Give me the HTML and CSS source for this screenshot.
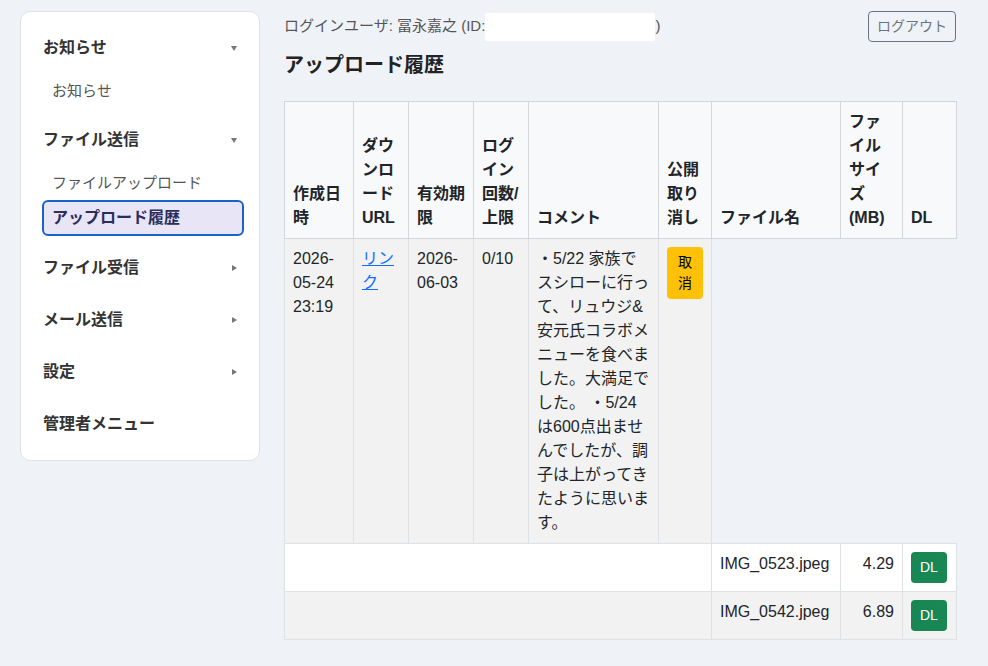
FILE: index.html
```html
<!DOCTYPE html>
<html lang="ja">
<head>
    <meta charset="UTF-8">
    <meta name="viewport" content="width=device-width, initial-scale=1.0">
    <title>アップロード履歴</title>
    <link rel="stylesheet" href="styles.css">
</head>
<body>
    <div class="layout">
        <!-- Side menu -->
        <aside class="sidebar">
            <div class="menu-group">
                <div class="menu-head">
                    <span>お知らせ</span>
                    <svg class="caret" width="6" height="5" viewBox="0 0 6 5"><polygon points="0,0 6,0 3,5"/></svg>
                </div>
                <ul class="menu-sub">
                    <li><a class="menu-link" href="#">お知らせ</a></li>
                </ul>
            </div>
            <div class="menu-group">
                <div class="menu-head">
                    <span>ファイル送信</span>
                    <svg class="caret" width="6" height="5" viewBox="0 0 6 5"><polygon points="0,0 6,0 3,5"/></svg>
                </div>
                <ul class="menu-sub">
                    <li><a class="menu-link" href="#">ファイルアップロード</a></li>
                    <li><a class="menu-link active" href="#">アップロード履歴</a></li>
                </ul>
            </div>
            <div class="menu-group">
                <div class="menu-head">
                    <span>ファイル受信</span>
                    <svg class="caret" width="5" height="6" viewBox="0 0 5 6"><polygon points="0,0 5,3 0,6"/></svg>
                </div>
            </div>
            <div class="menu-group">
                <div class="menu-head">
                    <span>メール送信</span>
                    <svg class="caret" width="5" height="6" viewBox="0 0 5 6"><polygon points="0,0 5,3 0,6"/></svg>
                </div>
            </div>
            <div class="menu-group">
                <div class="menu-head">
                    <span>設定</span>
                    <svg class="caret" width="5" height="6" viewBox="0 0 5 6"><polygon points="0,0 5,3 0,6"/></svg>
                </div>
            </div>
            <div class="menu-group">
                <div class="menu-head">
                    <span>管理者メニュー</span>
                </div>
            </div>
        </aside>

        <!-- Main content -->
        <main class="main">
            <div class="topbar">
                <div class="login-user">ログインユーザ: 冨永嘉之 (ID:<span class="masked"></span>)</div>
                <button class="btn btn-sm btn-outline">ログアウト</button>
            </div>

            <h1 class="page-title">アップロード履歴</h1>

            <table class="history">
                <colgroup>
                    <col class="w-created">
                    <col class="w-url">
                    <col class="w-expire">
                    <col class="w-login">
                    <col class="w-comment">
                    <col class="w-cancel">
                    <col class="w-name">
                    <col class="w-size">
                    <col class="w-dl">
                </colgroup>
                <thead>
                    <tr>
                        <th>作成日時</th>
                        <th>ダウンロードURL</th>
                        <th>有効期限</th>
                        <th>ログイン回数/上限</th>
                        <th>コメント</th>
                        <th>公開取り消し</th>
                        <th>ファイル名</th>
                        <th>ファイルサイズ(MB)</th>
                        <th>DL</th>
                    </tr>
                </thead>
                <tbody>
                    <tr>
                        <td>2026-05-24 23:19</td>
                        <td><a href="#">リンク</a></td>
                        <td>2026-06-03</td>
                        <td>0/10</td>
                        <td>・5/22 家族でスシローに行って、リュウジ&amp;安元氏コラボメニューを食べました。大満足でした。 ・5/24は600点出ませんでしたが、調子は上がってきたように思います。</td>
                        <td><button class="btn btn-sm btn-warning">取消</button></td>
                    </tr>
                    <tr>
                        <td colspan="6"></td>
                        <td>IMG_0523.jpeg</td>
                        <td class="num">4.29</td>
                        <td><button class="btn btn-sm btn-success">DL</button></td>
                    </tr>
                    <tr>
                        <td colspan="6"></td>
                        <td>IMG_0542.jpeg</td>
                        <td class="num">6.89</td>
                        <td><button class="btn btn-sm btn-success">DL</button></td>
                    </tr>
                </tbody>
            </table>
        </main>
    </div>
</body>
</html>
```

FILE: styles.css
```css
body {
    margin: 0;
    font-family: "Liberation Sans", "Noto Sans CJK JP", sans-serif;
    font-size: 16px;
    line-height: 1.5;
    color: #212529;
    background: #eff2f6;
}
.layout {
    display: flex;
    align-items: flex-start;
    gap: 24px;
    padding: 11px 32px 11px 20px;
}

/* Sidebar */
.sidebar {
    width: 240px;
    box-sizing: border-box;
    padding: 10px 16px 10px 22px;
    background: #fff;
    border: 1px solid #dde1e6;
    border-radius: 10px;
}
.menu-head {
    display: flex;
    justify-content: space-between;
    align-items: center;
    height: 52px;
    padding-right: 6px;
    font-weight: bold;
    color: #333;
}
.caret {
    fill: #777;
}
.menu-sub {
    list-style: none;
    margin: 0;
    padding: 0 0 6px;
}
.menu-link {
    display: block;
    margin: 0 -1px;
    padding: 4px 8px;
    border: 2px solid transparent;
    border-radius: 6px;
    font-size: 15px;
    line-height: 22px;
    color: #555;
    text-decoration: none;
}
.menu-link.active {
    font-size: 16px;
    line-height: 24px;
    font-weight: bold;
    color: #2b2d5c;
    background: #e8e6f6;
    border-color: #1b62c8;
}

/* Main */
.main {
    flex: 1;
    min-width: 0;
}
.topbar {
    display: flex;
    justify-content: space-between;
    align-items: center;
}
.login-user {
    font-size: 15px;
    color: #555;
}
.masked {
    display: inline-block;
    width: 170px;
    height: 28px;
    vertical-align: middle;
    background: #fff;
    border-radius: 2px;
}
.page-title {
    margin: 11px 0 24px;
    font-size: 20px;
    line-height: 1.2;
    font-weight: bold;
    color: #222;
}

/* Buttons */
.btn {
    font-family: inherit;
    border: 1px solid transparent;
    border-radius: 4px;
    cursor: pointer;
}
.btn-sm {
    padding: 4px 8px;
    font-size: 14px;
    line-height: 1.5;
}
.btn-outline {
    color: #6c757d;
    background: transparent;
    border-color: #6c757d;
}
.btn-warning {
    color: #000;
    background: #ffc107;
}
.btn-success {
    color: #fff;
    background: #198754;
}

/* History table */
.history {
    width: 672px;
    table-layout: fixed;
    border-collapse: collapse;
}
.w-created { width: 69px; }
.w-url { width: 55px; }
.w-expire { width: 65px; }
.w-login { width: 55px; }
.w-comment { width: 130px; }
.w-cancel { width: 53px; }
.w-name { width: 129px; }
.w-size { width: 62px; }
.w-dl { width: 54px; }
.history th,
.history td {
    padding: 8px;
    border: 1px solid #dee2e6;
    text-align: left;
}
.history th {
    vertical-align: bottom;
    background: #f8f9fa;
    border-color: #d3d7dc;
}
.history td {
    vertical-align: top;
    background: #fff;
}
.history tbody tr:nth-child(odd) td {
    background: #f2f2f2;
}
.history td.num {
    text-align: right;
}
.history a {
    color: #0d6efd;
}
```
